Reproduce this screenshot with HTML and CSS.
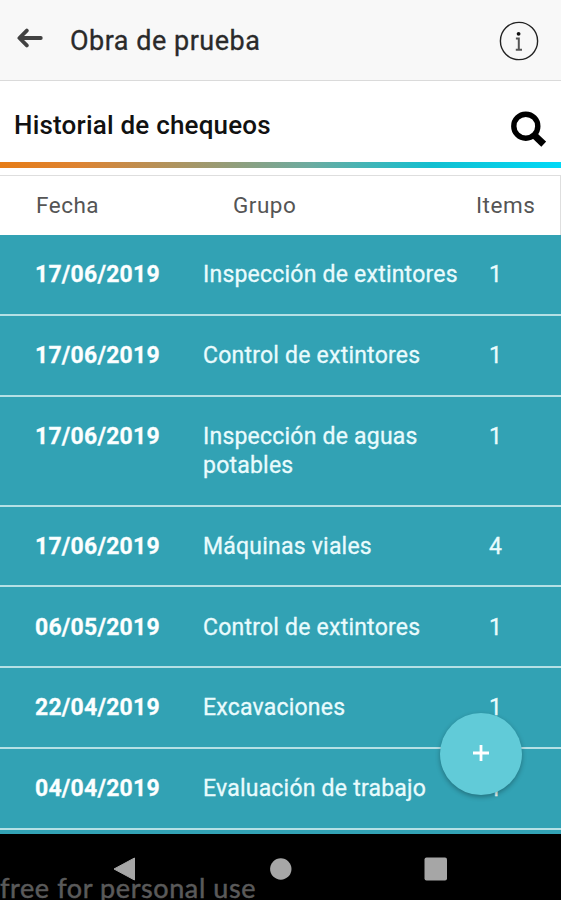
FILE: index.html
```html
<!DOCTYPE html>
<html lang="es">
<head>
    <meta charset="UTF-8">
    <meta name="viewport" content="width=device-width, initial-scale=1.0">
    <title>Obra de prueba</title>
    <link rel="stylesheet" href="styles.css">
</head>
<body>
    <div class="app">
        <header class="toolbar">
            <svg class="back-icon" viewBox="0 0 26 20">
                <path d="M9.8 2.6L2.4 10l7.4 7.4M3 10h20.8" fill="none" stroke="#424242" stroke-width="3.8" stroke-linecap="round" stroke-linejoin="round"/>
            </svg>
            <h1 class="toolbar-title">Obra de prueba</h1>
            <svg class="info-icon" viewBox="0 0 40 40">
                <circle cx="20" cy="20" r="18.6" fill="none" stroke="#222" stroke-width="1.4"/>
                <circle cx="19.6" cy="12.8" r="1.9" fill="#111"/>
                <path d="M16.9 17.6h2.9v10.8M16.8 28.7h6.2" fill="none" stroke="#555" stroke-width="2"/>
            </svg>
        </header>

        <div class="section-bar">
            <h2 class="section-title">Historial de chequeos</h2>
            <svg class="search-icon" viewBox="0 0 36 36">
                <circle cx="15.8" cy="15.2" r="12" fill="none" stroke="#000" stroke-width="5.4"/>
                <path d="M23.5 23.5l10.2 9.7" stroke="#000" stroke-width="7"/>
            </svg>
        </div>
        <div class="gradient-line"></div>

        <div class="table-head">
            <span class="head-date">Fecha</span>
            <span class="head-group">Grupo</span>
            <span class="head-items">Items</span>
        </div>

        <div class="table-body">
            <div class="row">
                <span class="date">17/06/2019</span>
                <span class="group">Inspección de extintores</span>
                <span class="items">1</span>
            </div>
            <div class="row">
                <span class="date">17/06/2019</span>
                <span class="group">Control de extintores</span>
                <span class="items">1</span>
            </div>
            <div class="row">
                <span class="date">17/06/2019</span>
                <span class="group">Inspección de aguas potables</span>
                <span class="items">1</span>
            </div>
            <div class="row">
                <span class="date">17/06/2019</span>
                <span class="group">Máquinas viales</span>
                <span class="items">4</span>
            </div>
            <div class="row">
                <span class="date">06/05/2019</span>
                <span class="group">Control de extintores</span>
                <span class="items">1</span>
            </div>
            <div class="row">
                <span class="date">22/04/2019</span>
                <span class="group">Excavaciones</span>
                <span class="items">1</span>
            </div>
            <div class="row">
                <span class="date">04/04/2019</span>
                <span class="group">Evaluación de trabajo</span>
                <span class="items">1</span>
            </div>
        </div>

        <button class="fab" aria-label="Agregar">
            <svg class="fab-icon" viewBox="0 0 16 16">
                <path d="M8 0v16M0 8h16" stroke="#fff" stroke-width="2.8"/>
            </svg>
        </button>

        <nav class="android-nav">
            <svg class="nav-icon" viewBox="0 0 24 24"><path d="M22.5 1v22L2 12z" fill="#a6a6a6" stroke="#a6a6a6" stroke-linejoin="round"/></svg>
            <svg class="nav-icon" viewBox="0 0 24 24"><circle cx="12.8" cy="12" r="10.7" fill="#a6a6a6"/></svg>
            <svg class="nav-icon" viewBox="0 0 24 24"><rect x=".5" y=".5" width="22.5" height="23" rx="2" fill="#a6a6a6"/></svg>
            <span class="watermark">free for personal use</span>
        </nav>
    </div>
</body>
</html>
```

FILE: styles.css
```css
* {
    box-sizing: border-box;
}
body {
    font-family: Roboto, sans-serif;
    background-color: #000;
    margin: 0;
}
.app {
    position: relative;
    display: flex;
    flex-direction: column;
    height: 900px;
    overflow: hidden;
    background-color: #fff;
}
.toolbar {
    display: flex;
    align-items: center;
    height: 81px;
    padding: 0 22px 0 17px;
    background-color: #f8f8f8;
    border-bottom: 1px solid #dadada;
}
.back-icon {
    width: 26px;
    height: 20px;
    margin-bottom: 5px;
}
.toolbar-title {
    flex: 1;
    margin: 2px 0 0 27px;
    font-size: 27px;
    font-weight: 400;
    letter-spacing: 0.5px;
    color: #2a2a2a;
    -webkit-text-stroke: 0.3px #2a2a2a;
}
.info-icon {
    width: 40px;
    height: 40px;
    margin-top: 2px;
}
.section-bar {
    display: flex;
    align-items: center;
    justify-content: space-between;
    height: 81px;
    padding: 0 15px 0 14px;
}
.section-title {
    margin: 0;
    padding-top: 6px;
    font-size: 26px;
    font-weight: 500;
    letter-spacing: 0.2px;
    color: #111;
}
.search-icon {
    width: 36px;
    height: 36px;
    margin-top: 15px;
}
.gradient-line {
    height: 6px;
    margin-bottom: 7px;
    background: linear-gradient(to right, #e67c17 0%, #dd8332 14%, #6dab9f 55%, #12bfd0 77%, #00d9f7 100%);
}
.table-head {
    display: flex;
    align-items: center;
    height: 60px;
    border-top: 1px solid #dedede;
    border-right: 1px solid #dedede;
    padding: 0 0 2px 36px;
    font-size: 22.5px;
    letter-spacing: 0.5px;
    color: #555;
}
.head-date {
    width: 197px;
}
.head-group {
    width: 243px;
}
.table-body {
    flex: 1;
    overflow: hidden;
    background-color: #32a2b4;
}
.row {
    display: grid;
    grid-template-columns: 168px 286px 1fr;
    padding: 25.1px 0 24.4px 35px;
    border-bottom: 2px solid #b5e0e5;
    font-size: 23px;
    line-height: 29.3px;
    letter-spacing: 0.22px;
    color: #e9fbfd;
    -webkit-text-stroke: 0.3px #e9fbfd;
}
.date {
    font-weight: 700;
    color: #fff;
}
.group {
    padding-right: 20px;
}
.fab {
    position: absolute;
    left: 440px;
    top: 713px;
    display: flex;
    align-items: center;
    justify-content: center;
    width: 82px;
    height: 82px;
    padding: 0 0 3px;
    border: none;
    border-radius: 50%;
    background-color: #61cbd8;
    box-shadow: 0 2px 5px rgba(0, 0, 0, 0.3);
}
.fab-icon {
    width: 16px;
    height: 16px;
}
.android-nav {
    position: relative;
    display: flex;
    justify-content: space-between;
    height: 66px;
    padding: 23px 113px 0 112px;
    background-color: #000;
}
.nav-icon {
    width: 24px;
    height: 24px;
}
.watermark {
    position: absolute;
    left: 0;
    bottom: -3px;
    font-family: Lato, sans-serif;
    font-size: 27px;
    font-weight: 400;
    line-height: 30px;
    letter-spacing: 0.6px;
    white-space: nowrap;
    color: #5a5a5a;
    -webkit-text-stroke: 0.5px #5a5a5a;
}
```
